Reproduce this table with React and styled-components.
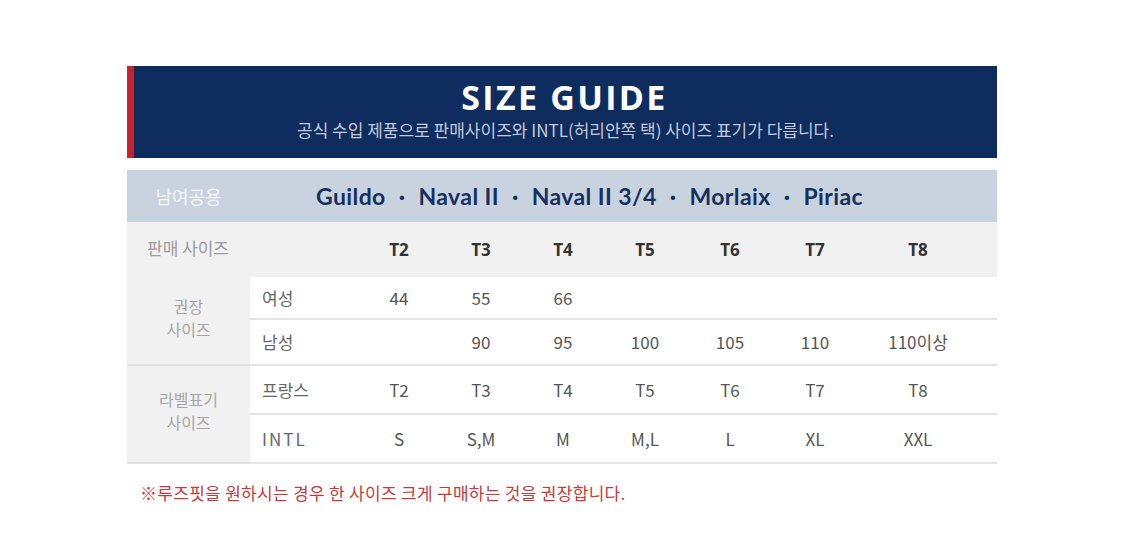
import React from "react";
import styled, { createGlobalStyle } from "styled-components";

const models = ["Guildo", "Naval II", "Naval II 3/4", "Morlaix", "Piriac"];
const sizes = ["T2", "T3", "T4", "T5", "T6", "T7", "T8"];

const groups = [
  {
    label: ["권장", "사이즈"],
    rows: [
      { name: "여성", values: ["44", "55", "66", "", "", "", ""] },
      { name: "남성", values: ["", "90", "95", "100", "105", "110", "110이상"] },
    ],
  },
  {
    label: ["라벨표기", "사이즈"],
    rows: [
      { name: "프랑스", values: ["T2", "T3", "T4", "T5", "T6", "T7", "T8"] },
      { name: "INTL", spaced: true, values: ["S", "S,M", "M", "M,L", "L", "XL", "XXL"] },
    ],
  },
];

const GlobalStyle = createGlobalStyle`
  body {
    margin: 0;
    background: #ffffff;
    font-family: "Noto Sans CJK KR", "Noto Sans", sans-serif;
  }
`;

export default function App() {
  return (
    <>
      <GlobalStyle />
      <Page>
        <Header>
          <Title>SIZE GUIDE</Title>
          <Subtitle>공식 수입 제품으로 판매사이즈와 INTL(허리안쪽 택) 사이즈 표기가 다릅니다.</Subtitle>
        </Header>

        <Band>
          <BandLabel>남여공용</BandLabel>
          <Models>
            {models.map((m, i) => (
              <React.Fragment key={m}>
                {i > 0 && <Dot>·</Dot>}
                <span>{m}</span>
              </React.Fragment>
            ))}
          </Models>
        </Band>

        <Table>
          <HeadLabel>판매 사이즈</HeadLabel>
          {sizes.map((s, i) => (
            <HeadCell key={s} $last={i === sizes.length - 1}>
              {s}
            </HeadCell>
          ))}

          {groups.map((g) => (
            <React.Fragment key={g.label.join("")}>
              <GroupLabel>
                {g.label.map((l) => (
                  <span key={l}>{l}</span>
                ))}
              </GroupLabel>
              {g.rows.map((r) => (
                <React.Fragment key={r.name}>
                  <RowName $spaced={r.spaced}>{r.name}</RowName>
                  {r.values.map((v, i) => (
                    <Cell key={i} $last={i === r.values.length - 1}>
                      {v}
                    </Cell>
                  ))}
                </React.Fragment>
              ))}
            </React.Fragment>
          ))}
        </Table>

        <Note>※루즈핏을 원하시는 경우 한 사이즈 크게 구매하는 것을 권장합니다.</Note>
      </Page>
    </>
  );
}

const Page = styled.div`
  width: 870px;
  margin-left: 127px;
  padding-top: 66px;
`;

const Header = styled.div`
  height: 92px;
  box-sizing: border-box;
  background: #0e2c5e;
  border-left: 7px solid #c8202f;
  display: flex;
  flex-direction: column;
  align-items: center;
  padding-top: 10px;
`;

const Title = styled.div`
  font-family: "Open Sans", sans-serif;
  font-weight: 700;
  font-size: 34px;
  line-height: 42px;
  letter-spacing: 2.3px;
  color: #ffffff;
  margin-left: -2px;
`;

const Subtitle = styled.div`
  font-size: 17px;
  line-height: 22px;
  color: #c3c9d6;
  margin-top: 1px;
`;

const Band = styled.div`
  margin-top: 12px;
  height: 52px;
  background: #c9d3e0;
  display: flex;
  align-items: center;
`;

const BandLabel = styled.div`
  width: 123px;
  text-align: center;
  font-size: 18px;
  color: #f3f5f8;
`;

const Models = styled.div`
  margin-left: 66px;
  font-family: Lato, sans-serif;
  font-weight: 700;
  font-size: 23px;
  letter-spacing: 0.4px;
  color: #15305e;
  display: flex;
  align-items: center;
`;

const Dot = styled.span`
  margin: 0 13px;
`;

const Table = styled.div`
  display: grid;
  grid-template-columns: 123px 108px 82px 82px 82px 82px 88px 82px 141px;
  grid-template-rows: 55px 43px 46px 49px 49px;
  font-size: 17px;
  line-height: 22px;
`;

const HeadLabel = styled.div`
  grid-column: span 2;
  background: #f1f1f1;
  color: #9b9b9b;
  display: flex;
  align-items: center;
  padding-left: 20px;
  padding-bottom: 3px;
`;

const HeadCell = styled.div`
  background: #f1f1f1;
  display: flex;
  align-items: center;
  justify-content: center;
  font-family: "Open Sans", sans-serif;
  font-weight: 700;
  color: #333333;
  padding-right: ${(p) => (p.$last ? "17px" : "0")};
`;

const GroupLabel = styled.div`
  grid-row: span 2;
  background: #f1f1f1;
  border-bottom: 2px solid #e1e1e1;
  display: flex;
  flex-direction: column;
  align-items: center;
  justify-content: center;
  color: #a6a6a6;
  font-size: 16px;
  line-height: 23px;
  padding-bottom: 6px;
`;

const RowName = styled.div`
  border-bottom: 2px solid #e4e4e4;
  display: flex;
  align-items: center;
  padding-left: 12px;
  color: #666666;
  letter-spacing: ${(p) => (p.$spaced ? "2px" : "0")};
`;

const Cell = styled.div`
  border-bottom: 2px solid #e4e4e4;
  display: flex;
  align-items: center;
  justify-content: center;
  color: #555555;
  padding-right: ${(p) => (p.$last ? "17px" : "0")};
`;

const Note = styled.div`
  margin-top: 16px;
  padding-left: 13px;
  font-size: 17px;
  letter-spacing: 0.3px;
  color: #c53a3f;
`;
